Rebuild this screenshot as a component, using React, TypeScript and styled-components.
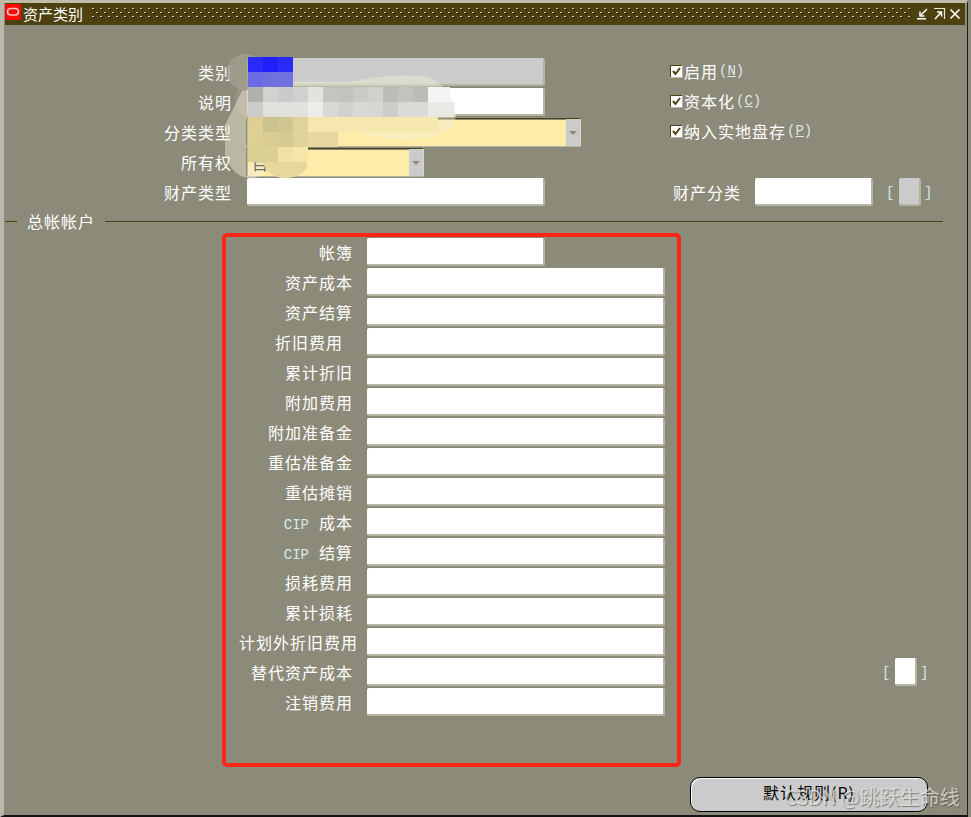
import React from "react";
import styled, { createGlobalStyle } from "styled-components";

const Global = createGlobalStyle`
  html, body { margin: 0; padding: 0; background: #8c8a78; }
  body { font-family: "Noto Sans CJK SC", "Liberation Sans", sans-serif; overflow: hidden; }
`;

const Shell = styled.div`
  position: relative;
  width: 971px;
  height: 817px;
  background: #8c8a78;
  overflow: hidden;
`;

const Frame = styled.div`
  box-sizing: border-box;
  width: 968px;
  height: 817px;
  border-left: 4px solid #b9b8aa;
  border-top: 3px solid #bdbca6;
  border-right: 1px solid #1c1c1c;
  border-bottom: 2px solid #141414;
  display: flex;
  flex-direction: column;
`;

const TitleBar = styled.div`
  height: 22px;
  flex: none;
  margin: 0 2px 0 1px;
  background: #4d4110;
  display: flex;
  align-items: center;
  color: #fff;
  font-size: 15px;
`;

const LogoBox = styled.svg`
  width: 16px;
  height: 16px;
  flex: none;
  margin-top: -5px;
`;

const TitleText = styled.span`
  margin-left: 2px;
  width: 69px;
  flex: none;
  line-height: 22px;
  white-space: nowrap;
`;

const Grip = styled.svg`
  flex: 1;
  height: 22px;
  min-width: 0;
`;

const WinIcon = styled.svg`
  width: 14px;
  height: 14px;
  flex: none;
  margin-left: ${(p: { $gap: number }) => p.$gap}px;
`;

const Form = styled.div`
  padding-top: 33px;
  display: flex;
  flex-direction: column;
`;

const TopGrid = styled.div`
  display: grid;
  grid-template-columns: 662px 1fr;
  height: 150px;
`;

const Column = styled.div`
  display: flex;
  flex-direction: column;
`;

const Row = styled.div`
  height: 30px;
  flex: none;
  display: flex;
  align-items: flex-start;
`;

const Label = styled.div`
  width: 228px;
  flex: none;
  margin-right: 15px;
  text-align: right;
  color: #fff;
  font-size: 16px;
  letter-spacing: 1px;
  line-height: 28px;
  white-space: nowrap;
`;

const Field = styled.div<{ $w: number; $tone?: "white" | "gray" }>`
  box-sizing: border-box;
  width: ${(p) => p.$w}px;
  height: 28px;
  flex: none;
  background: ${(p) => (p.$tone === "gray" ? "#cbcbcb" : "#fff")};
  border-radius: 2px;
  border-right: 2px solid #b5b4a2;
  border-bottom: 2px solid #b5b4a2;
`;

const Select = styled.div<{ $w: number }>`
  box-sizing: border-box;
  width: ${(p) => p.$w}px;
  height: 29px;
  flex: none;
  margin-left: -1px;
  background: #ffeca8;
  border: 1px solid #4d4110;
  border-right-color: #d8d7c8;
  border-bottom-color: #b5b4a2;
  box-shadow: inset 1px 1px 0 #8c8a78;
  border-radius: 2px;
  display: flex;
  justify-content: space-between;
  align-items: center;
  color: #000;
  font-size: 16px;
  padding-left: 5px;
`;

const SelectValue = styled.span`
  line-height: 26px;
`;

const Arrow = styled.div`
  width: 14px;
  align-self: stretch;
  background: #cbcbcb;
  display: flex;
  align-items: center;
  justify-content: center;
  &::after {
    content: "";
    border-left: 4px solid transparent;
    border-right: 4px solid transparent;
    border-top: 4px solid #8c8a78;
  }
`;

const CheckRow = styled.label`
  height: 30px;
  flex: none;
  margin-left: 4px;
  padding-top: 0;
  display: flex;
  align-items: center;
  color: #fff;
  font-size: 16px;
  letter-spacing: 1px;
  margin-top: -2px;
  margin-bottom: 2px;
`;

const CheckBox = styled.svg`
  width: 13px;
  height: 13px;
  flex: none;
  margin-right: 1px;
`;

const Hot = styled.span`
  font-family: "Liberation Mono", monospace;
  font-size: 14px;
  letter-spacing: 0;
  color: #dfe8e4;
  margin-left: 1px;
`;

const SideRow = styled.div`
  height: 30px;
  display: flex;
  align-items: flex-start;
  margin-left: 7px;
`;

const SideLabel = styled.div`
  width: 68px;
  flex: none;
  margin-right: 14px;
  color: #fff;
  font-size: 16px;
  letter-spacing: 1px;
  line-height: 28px;
  white-space: nowrap;
`;

const Flex = styled.div`
  display: flex;
  align-items: flex-start;
`;

const Bracket = styled.span<{ $after?: boolean }>`
  font-family: "Liberation Mono", monospace;
  font-size: 14px;
  line-height: 30px;
  width: 8px;
  flex: none;
  color: #d4e6e6;
  margin-left: ${(p) => (p.$after ? 3 : 0)}px;
  margin-right: ${(p) => (p.$after ? 0 : 5)}px;
`;

const Spacer = styled.div`
  height: 30px;
  flex: none;
`;

const Divider = styled.div`
  height: 26px;
  margin: 0 24px 4px 1px;
  display: flex;
  align-items: center;
  color: #fff;
  font-size: 16px;
  letter-spacing: 1px;
  gap: 10px;
`;

const DividerLine = styled.div<{ $grow?: boolean }>`
  height: 1px;
  background: #4d4110;
  width: 12px;
  flex: ${(p) => (p.$grow ? "1" : "none")};
`;

const AccountList = styled.div`
  display: flex;
  flex-direction: column;
`;

const AccountLabel = styled.div<{ $inset: number }>`
  box-sizing: border-box;
  width: 354px;
  flex: none;
  margin-right: 9px;
  padding-right: ${(p) => p.$inset}px;
  text-align: right;
  color: #fff;
  font-size: 16px;
  letter-spacing: 1px;
  line-height: 28px;
  white-space: nowrap;
`;

const Latin = styled.span`
  font-family: "Liberation Mono", monospace;
  font-size: 14px;
  letter-spacing: 0;
  color: #d4ecec;
  margin-right: 10px;
`;

const TrailingGroup = styled.div`
  display: flex;
  align-items: flex-start;
  margin-left: 217px;
`;

const Footer = styled.div`
  margin: 59px 0 0 686px;
`;

const DefaultButton = styled.button`
  box-sizing: border-box;
  width: 238px;
  height: 35px;
  border: 1px solid #000;
  border-radius: 10px;
  background: #cbcbcb;
  box-shadow: inset 1px 1px 0 #fff;
  color: #000;
  font-family: "Noto Sans CJK SC", sans-serif;
  font-size: 16px;
  letter-spacing: 1px;
  padding: 0 0 5px;
`;

const Annotation = styled.div`
  position: absolute;
  left: 222px;
  top: 233px;
  width: 459px;
  height: 534px;
  box-sizing: border-box;
  border: 4px solid #fb2616;
  border-radius: 5px;
  pointer-events: none;
`;

const Censor = styled.svg`
  position: absolute;
  left: 225px;
  top: 52px;
  width: 240px;
  height: 130px;
  pointer-events: none;
`;

const Watermark = styled.div`
  position: absolute;
  left: 784px;
  top: 783px;
  font-size: 20px;
  line-height: 28px;
  color: rgba(235, 235, 235, 0.72);
  text-shadow: 1px 1px 1px rgba(60, 60, 50, 0.55);
  white-space: nowrap;
  pointer-events: none;
`;

const accounts: { cip?: boolean; name: string; inset?: number; w?: number }[] = [
  { name: "帐簿", w: 178 },
  { name: "资产成本" },
  { name: "资产结算" },
  { name: "折旧费用", inset: 15 },
  { name: "累计折旧" },
  { name: "附加费用" },
  { name: "附加准备金" },
  { name: "重估准备金" },
  { name: "重估摊销" },
  { cip: true, name: "成本" },
  { cip: true, name: "结算" },
  { name: "损耗费用" },
  { name: "累计损耗" },
  { name: "计划外折旧费用", inset: 0 },
  { name: "替代资产成本" },
  { name: "注销费用" },
];

const Check = () => (
  <CheckBox viewBox="0 0 13 13">
    <rect x="0" y="0" width="13" height="13" fill="#b5b4a2" />
    <rect x="0" y="0" width="12" height="12" fill="#4d4110" />
    <rect x="1" y="1" width="11" height="11" fill="#fff" />
    <path d="M3 6l2.5 3L10 3" fill="none" stroke="#4d4110" strokeWidth="2" />
  </CheckBox>
);

const row0 = ["#2a2afa", "#1f1ff8", "#2a2afa"];
const row1 = ["#6a6ae4", "#7070dc", "#7070e0"];
const row2 = ["#b0b0ac", "#d2d2d0", "#cacac8", "#d0d0ce", "#e2e2de", "#c4c4c0", "#c2c2be", "#cacac6", "#d0d0cc", "#bcbcb8", "#c2c2be", "#bcbcb8"];
const row3 = ["#cccccA", "#e0e0dc", "#e2e2de", "#e2e2de", "#ecece8", "#d8d8d4", "#d0d0cc", "#d8d8d4", "#d6d6d2", "#ccccc8", "#dadad6", "#dadad6"];
const row4 = ["#dfcf96", "#ccc28e", "#d0c690", "#dfd29a"];
const row5 = ["#dfd096", "#d8cc92", "#d6ca90", "#e0d39a"];
const row6 = ["#dccf94", "#dccf94", "#f0e2a4", "#f5e6a8"];
const mosaic = [row0, row1, row2, row3, row4, row5, row6];

export default function App() {
  return (
    <Shell>
      <Global />
      <Frame>
        <TitleBar>
          <LogoBox viewBox="0 0 16 16">
            <rect width="16" height="16" fill="#fb0a0a" />
            <rect x="2.5" y="4.5" width="11" height="6.5" rx="3.2" fill="none" stroke="#ffc0c0" strokeWidth="1.6" />
          </LogoBox>
          <TitleText>资产类别</TitleText>
          <Grip>
            <defs>
              <pattern id="grip" width="8" height="8" patternUnits="userSpaceOnUse" x="0" y="5">
                <rect x="0" y="0" width="2" height="1" fill="#d8d3a0" />
                <rect x="1" y="1" width="2" height="1" fill="#0d0d00" />
                <rect x="4" y="4" width="2" height="1" fill="#d8d3a0" />
                <rect x="5" y="5" width="2" height="1" fill="#0d0d00" />
              </pattern>
            </defs>
            <rect x="0" y="5" width="100%" height="12" fill="url(#grip)" />
          </Grip>
          <WinIcon $gap={6} viewBox="0 0 14 14">
            <path d="M11 2L4.5 8.5M4 4.5v4.5h4.5" fill="none" stroke="#fff" strokeWidth="1.5" />
            <rect x="1" y="11" width="9" height="1.5" fill="#fff" />
          </WinIcon>
          <WinIcon $gap={2} viewBox="0 0 14 14">
            <path d="M2 1.5h10.5V12" fill="none" stroke="#e8e6cc" strokeWidth="1.2" />
            <path d="M3 12L9 5.5M5 5h4.5v4.5" fill="none" stroke="#fff" strokeWidth="1.5" />
          </WinIcon>
          <WinIcon $gap={2} viewBox="0 0 14 14">
            <path d="M2.5 2.5l9 9M11.5 2.5l-9 9" fill="none" stroke="#fff" strokeWidth="1.7" />
          </WinIcon>
          <Spacer as="span" style={{ width: 3, height: 1 }} />
        </TitleBar>
        <Form>
          <TopGrid>
            <Column>
              <Row>
                <Label>类别</Label>
                <Field $w={298} $tone="gray" />
              </Row>
              <Row>
                <Label>说明</Label>
                <Field $w={298} />
              </Row>
              <Row>
                <Label>分类类型</Label>
                <Select $w={335}>
                  <span />
                  <Arrow />
                </Select>
              </Row>
              <Row>
                <Label>所有权</Label>
                <Select $w={178}>
                  <SelectValue>目</SelectValue>
                  <Arrow />
                </Select>
              </Row>
              <Row>
                <Label>财产类型</Label>
                <Field $w={298} />
              </Row>
            </Column>
            <Column>
              <CheckRow>
                <Check />
                启用<Hot>(<u>N</u>)</Hot>
              </CheckRow>
              <CheckRow>
                <Check />
                资本化<Hot>(<u>C</u>)</Hot>
              </CheckRow>
              <CheckRow>
                <Check />
                纳入实地盘存<Hot>(<u>P</u>)</Hot>
              </CheckRow>
              <Spacer />
              <SideRow>
                <SideLabel>财产分类</SideLabel>
                <Flex>
                  <Field $w={118} />
                  <TrailBracket gray />
                </Flex>
              </SideRow>
            </Column>
          </TopGrid>
          <Divider>
            <DividerLine />
            <span>总帐帐户</span>
            <DividerLine $grow />
          </Divider>
          <AccountList>
            {accounts.map((a, i) => (
              <Row key={i}>
                <AccountLabel $inset={a.inset ?? 5}>
                  {a.cip && <Latin>CIP</Latin>}
                  {a.name}
                </AccountLabel>
                <Field $w={a.w ?? 298} />
                {a.name === "替代资产成本" && (
                  <TrailingGroup>
                    <TrailBracket />
                  </TrailingGroup>
                )}
              </Row>
            ))}
          </AccountList>
          <Footer>
            <DefaultButton>默认规则(R)</DefaultButton>
          </Footer>
        </Form>
      </Frame>
      <Censor viewBox="225 52 240 130">
        <circle cx="245" cy="72" r="18" fill="#a3a190" opacity="0.75" />
        <ellipse cx="252" cy="100" rx="17" ry="19" fill="#a3a190" opacity="0.55" />
        <path
          d="M290 82c40-2 50 2 70-2 25-5 65-7 76 1 14 10 21 24 20 34-1 12-10 19-24 22-20 4-45 3-68-3-18-5-32-9-44-6-14 3-18 12-32 14l-20 25c-8 14-24 14-34 4-10-12-12-24-12-40l20-40z"
          fill="#f2efd8"
          opacity="0.45"
        />
        {mosaic.map((cells, y) =>
          cells.map((c, x) => (
            <rect key={`${x}-${y}`} x={248 + x * 15} y={57 + y * 15} width="15" height="15" fill={c} />
          ))
        )}
        <rect x="428" y="87" width="22" height="15" fill="#f4f4f2" />
        <rect x="428" y="102" width="26" height="15" fill="#e8e8e4" />
        <rect x="308" y="117" width="130" height="15" fill="#f5e7ad" />
        <rect x="308" y="132" width="30" height="15" fill="#e6d8a0" />
        <path d="M262 162h45v6c-6 6-10 9-18 10-12 1-22-4-27-16z" fill="#e6d89c" />
      </Censor>
      <Annotation />
      <Watermark>CSDN @跳跃生命线</Watermark>
    </Shell>
  );
}

function TrailBracket({ gray }: { gray?: boolean }) {
  return (
    <Flex style={gray ? { marginLeft: 13 } : undefined}>
      <Bracket>[</Bracket>
      <Field $w={22} $tone={gray ? "gray" : "white"} />
      <Bracket $after>]</Bracket>
    </Flex>
  );
}
